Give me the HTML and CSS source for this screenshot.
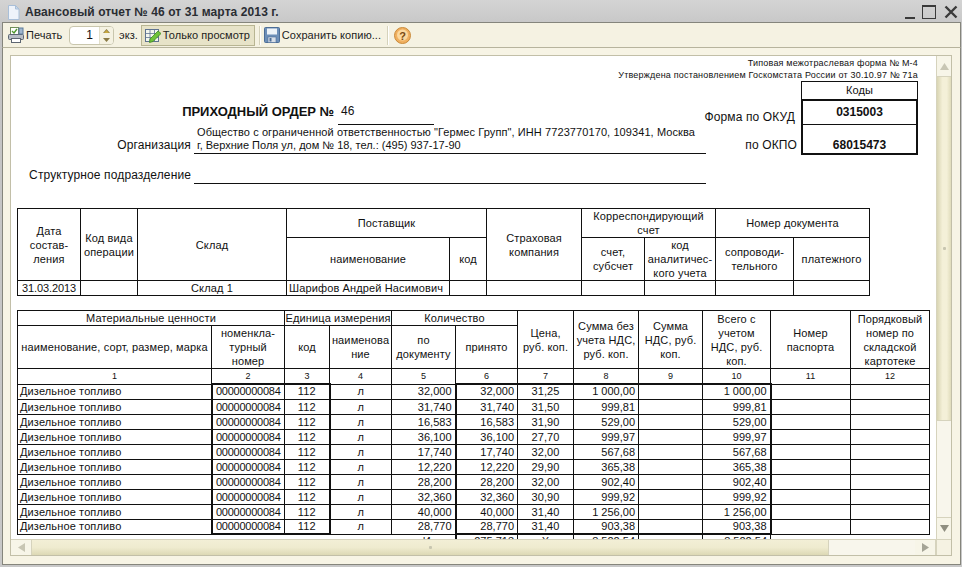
FILE: index.html
```html
<!DOCTYPE html>
<html lang="ru">
<head>
<meta charset="utf-8">
<title>Авансовый отчет № 46 от 31 марта 2013 г.</title>
<link rel="stylesheet" href="styles.css">
</head>
<body>
<div class="window">
  <header class="titlebar">
    <svg class="doc-icon" width="13" height="15" viewBox="0 0 13 15"><path d="M1.500.5h7l3.500 3.500v10.500h-10.500z" fill="#eef3fa" stroke="#a9bfd8"/><path d="M8.500.5v3.500h3.500z" fill="#c9d9ea" stroke="#a9bfd8"/></svg>
    <span class="title">Авансовый отчет № 46 от 31 марта 2013 г.</span>
    <div class="winbtns">
      <span class="wb-min"></span>
      <span class="wb-max"></span>
      <svg width="14" height="14" viewBox="0 0 14 14"><path d="M1.500 1.500l11 11M12.500 1.500l-11 11" stroke="#3a3a3a" stroke-width="2.400"/></svg>
    </div>
  </header>
  <div class="toolbar">
    <svg class="ic-print" width="17" height="16" viewBox="0 0 17 16">
      <rect x="2.500" y=".5" width="8" height="7" fill="#fff" stroke="#6f8f5a"/>
      <path d="M4 4l2 2 3-4" fill="none" stroke="#4f9a2f" stroke-width="1.400"/>
      <rect x=".5" y="7.500" width="15" height="5" rx="1" fill="#b8bec6" stroke="#5d6672"/>
      <rect x="3.500" y="11.500" width="9" height="4" fill="#fff" stroke="#5d6672"/>
      <rect x="11" y="1" width="4" height="6" fill="#9fb6cf" stroke="#5d7a99"/>
    </svg>
    <span class="tb-text t-print">Печать</span>
    <div class="spin">
      <span class="spin-val">1</span>
      <span class="spin-arrows">
        <svg width="7" height="13" viewBox="0 0 7 13"><path d="M3.500 0L7 4H0zM3.500 13L0 9h7z" fill="#8a7a45"/><path d="M3.500 1L6 4H1z" fill="#c9a93f"/></svg>
      </span>
    </div>
    <span class="tb-text t-ekz">экз.</span>
    <div class="tb-pressed">
      <svg width="16" height="16" viewBox="0 0 16 16">
        <rect x=".5" y="2.500" width="13" height="12" fill="#f3f6ee" stroke="#5f7390"/>
        <path d="M.5 6.500h13M.5 10.500h13M5 2.500v12M9.500 2.500v12" stroke="#5f7390" stroke-width=".8"/>
        <path d="M5 12l8-8 3 2.500-8 8-3.500 1z" fill="#6fc23a" stroke="#3f8a22" stroke-width=".8"/>
      </svg>
      <span class="tb-text t-view">Только просмотр</span>
    </div>
    <span class="sep s1"></span>
    <svg class="ic-save" width="16" height="16" viewBox="0 0 16 16">
      <rect x=".5" y=".5" width="15" height="15" rx="1" fill="#6d8fb8" stroke="#4c6d96"/>
      <rect x="3" y="1.500" width="10" height="6" fill="#eef3f8"/>
      <rect x="4" y="10" width="8" height="5.500" fill="#d8dfe8" stroke="#4c6d96" stroke-width=".6"/>
      <rect x="5.500" y="11" width="2" height="3.500" fill="#4c6d96"/>
    </svg>
    <span class="tb-text t-save">Сохранить копию...</span>
    <span class="sep s2"></span>
    <svg class="ic-help" width="17" height="17" viewBox="0 0 17 17">
      <circle cx="8.500" cy="8.500" r="8" fill="#f0b060" stroke="#c98a3a"/>
      <circle cx="8.500" cy="8" r="5.500" fill="#fbd9a0"/>
      <text x="8.500" y="12.500" class="help-q">?</text>
    </svg>
  </div>
  <div class="client">
    <div class="frame">
      <div class="upper">
        <div class="viewport">
          <div class="doc">
            <div class="head">
              <div class="head-left">
                <div class="order-row">
                  <span class="order-title">ПРИХОДНЫЙ ОРДЕР №</span>
                  <span class="order-num">46</span>
                </div>
                <div class="org-row">
                  <span class="field-label">Организация</span>
                  <div class="field-val">
                    <div class="org-1">Общество с ограниченной ответственностью "Гермес Групп", ИНН 7723770170, 109341, Москва</div>
                    <div class="org-2">г, Верхние Поля ул, дом № 18, тел.: (495) 937-17-90</div>
                  </div>
                </div>
                <div class="sub-row">
                  <span class="field-label">Структурное подразделение</span>
                  <div class="field-val sub-val"></div>
                </div>
              </div>
              <div class="head-right">
                <div class="form-note">Типовая межотраслевая форма № М-4</div>
                <div class="form-note">Утверждена постановлением Госкомстата России от 30.10.97 № 71а</div>
                <div class="codes">
                  <span></span><div class="code-h">Коды</div>
                  <span class="code-l l1">Форма по ОКУД</span><div class="code-v v1">0315003</div>
                  <span class="code-l l2">по ОКПО</span><div class="code-v v2">68015473</div>
                </div>
              </div>
            </div>

            <table class="t t1">
              <colgroup><col class="a1"><col class="a2"><col class="a3"><col class="a4"><col class="a5"><col class="a6"><col class="a7"><col class="a8"><col class="a9"><col class="a10"></colgroup>
              <tr class="h29">
                <td rowspan="2">Дата<br>состав-<br>ления</td>
                <td rowspan="2">Код вида<br>операции</td>
                <td rowspan="2">Склад</td>
                <td colspan="2">Поставщик</td>
                <td rowspan="2">Страховая<br>компания</td>
                <td colspan="2">Корреспондирующий<br>счет</td>
                <td colspan="2">Номер документа</td>
              </tr>
              <tr class="h43">
                <td>наименование</td><td>код</td>
                <td>счет,<br>субсчет</td><td>код<br>аналитичес-<br>кого учета</td>
                <td>сопроводи-<br>тельного</td><td>платежного</td>
              </tr>
              <tr class="h15">
                <td class="date">31.03.2013</td><td></td><td>Склад 1</td><td class="l">Шарифов Андрей Насимович</td><td></td><td></td><td></td><td></td><td></td><td></td>
              </tr>
            </table>

            <table class="t t2">
              <colgroup><col class="b1"><col class="b2"><col class="b3"><col class="b4"><col class="b5"><col class="b6"><col class="b7"><col class="b8"><col class="b9"><col class="b10"><col class="b11"><col class="b12"></colgroup>
              <tr class="h15">
                <td colspan="2">Материальные ценности</td>
                <td colspan="2">Единица измерения</td>
                <td colspan="2">Количество</td>
                <td rowspan="2">Цена,<br>руб. коп.</td>
                <td rowspan="2">Сумма без<br>учета НДС,<br>руб. коп.</td>
                <td rowspan="2">Сумма<br>НДС, руб.<br>коп.</td>
                <td rowspan="2">Всего с<br>учетом<br>НДС, руб.<br>коп.</td>
                <td rowspan="2">Номер<br>паспорта</td>
                <td rowspan="2">Порядковый<br>номер по<br>складской<br>картотеке</td>
              </tr>
              <tr class="h43">
                <td>наименование, сорт, размер, марка</td>
                <td>номенкла-<br>турный<br>номер</td>
                <td>код</td><td>наименова<br>ние</td>
                <td>по<br>документу</td><td>принято</td>
              </tr>
              <tr class="h15 small"><td>1</td><td>2</td><td>3</td><td>4</td><td>5</td><td>6</td><td>7</td><td>8</td><td>9</td><td>10</td><td>11</td><td>12</td></tr>
              <tr class="h15 first"><td class="l">Дизельное топливо</td><td class="tl g cd">00000000084</td><td class="g">112</td><td class="tl">л</td><td class="r">32,000</td><td class="tl g r">32,000</td><td class="g">31,25</td><td class="g r">1 000,00</td><td class="g"></td><td class="g r tr">1 000,00</td><td></td><td></td></tr>
              <tr class="h15"><td class="l">Дизельное топливо</td><td class="tl cd">00000000084</td><td>112</td><td class="tl">л</td><td class="r">31,740</td><td class="tl r">31,740</td><td>31,50</td><td class="r">999,81</td><td></td><td class="r tr">999,81</td><td></td><td></td></tr>
              <tr class="h15"><td class="l">Дизельное топливо</td><td class="tl cd">00000000084</td><td>112</td><td class="tl">л</td><td class="r">16,583</td><td class="tl r">16,583</td><td>31,90</td><td class="r">529,00</td><td></td><td class="r tr">529,00</td><td></td><td></td></tr>
              <tr class="h15"><td class="l">Дизельное топливо</td><td class="tl cd">00000000084</td><td>112</td><td class="tl">л</td><td class="r">36,100</td><td class="tl r">36,100</td><td>27,70</td><td class="r">999,97</td><td></td><td class="r tr">999,97</td><td></td><td></td></tr>
              <tr class="h15"><td class="l">Дизельное топливо</td><td class="tl cd">00000000084</td><td>112</td><td class="tl">л</td><td class="r">17,740</td><td class="tl r">17,740</td><td>32,00</td><td class="r">567,68</td><td></td><td class="r tr">567,68</td><td></td><td></td></tr>
              <tr class="h15"><td class="l">Дизельное топливо</td><td class="tl cd">00000000084</td><td>112</td><td class="tl">л</td><td class="r">12,220</td><td class="tl r">12,220</td><td>29,90</td><td class="r">365,38</td><td></td><td class="r tr">365,38</td><td></td><td></td></tr>
              <tr class="h15"><td class="l">Дизельное топливо</td><td class="tl cd">00000000084</td><td>112</td><td class="tl">л</td><td class="r">28,200</td><td class="tl r">28,200</td><td>32,00</td><td class="r">902,40</td><td></td><td class="r tr">902,40</td><td></td><td></td></tr>
              <tr class="h15"><td class="l">Дизельное топливо</td><td class="tl cd">00000000084</td><td>112</td><td class="tl">л</td><td class="r">32,360</td><td class="tl r">32,360</td><td>30,90</td><td class="r">999,92</td><td></td><td class="r tr">999,92</td><td></td><td></td></tr>
              <tr class="h15"><td class="l">Дизельное топливо</td><td class="tl cd">00000000084</td><td>112</td><td class="tl">л</td><td class="r">40,000</td><td class="tl r">40,000</td><td>31,40</td><td class="r">1 256,00</td><td></td><td class="r tr">1 256,00</td><td></td><td></td></tr>
              <tr class="h15 last"><td class="l">Дизельное топливо</td><td class="tl cd">00000000084</td><td>112</td><td class="tl">л</td><td class="r">28,770</td><td class="tl r">28,770</td><td>31,40</td><td class="r">903,38</td><td></td><td class="r tr">903,38</td><td></td><td></td></tr>
              <tr class="h15 total"><td class="n"></td><td class="n"></td><td class="n"></td><td class="n"></td><td class="r n rb">Итого</td><td class="r rb">275,713</td><td class="rb">Х</td><td class="r rb">8 522,54</td><td class="rb"></td><td class="r rb">8 522,54</td><td class="n"></td><td class="n"></td></tr>
            </table>
          </div>
        </div>
        <div class="vscroll">
          <div class="sb-btn v"><svg width="9" height="7" viewBox="0 0 9 7"><path d="M4.500 0L9 7H0z" fill="#c8c6b4"/></svg></div>
          <div class="sb-thumb v"><span class="grip"></span></div>
          <div class="sb-track v"></div>
          <div class="sb-btn v"><svg width="9" height="7" viewBox="0 0 9 7"><path d="M4.500 7L0 0h9z" fill="#8f8e80"/></svg></div>
        </div>
      </div>
      <div class="hscroll">
        <div class="sb-btn h"><svg width="7" height="9" viewBox="0 0 7 9"><path d="M0 4.500L7 0v9z" fill="#c8c6b4"/></svg></div>
        <div class="sb-thumb h"><span class="grip"></span></div>
        <div class="sb-track"></div>
        <div class="sb-btn h"><svg width="7" height="9" viewBox="0 0 7 9"><path d="M7 4.500L0 9V0z" fill="#a5a496"/></svg></div>
        <div class="sb-corner"></div>
      </div>
    </div>
  </div>
</div>
</body>
</html>
```
FILE: styles.css
```css
* { box-sizing: border-box; }
html, body { margin: 0; padding: 0; }
body {
  width: 962px;
  height: 567px;
  overflow: hidden;
  background: #c9c9c9;
  font-family: "Liberation Sans", Arial, sans-serif;
  color: #111;
}
.window { width: 962px; height: 567px; display: flex; flex-direction: column; padding: 0 1px 2px 2px; background: linear-gradient(#d4d4d4, #c4c4c4 30px, #c8c8c8); }

/* title */
.titlebar { height: 22px; flex: none; display: flex; align-items: center; padding: 2px 3px 0 5px; }
.doc-icon { margin-right: 5px; }
.title { font-size: 12px; font-weight: bold; color: #2a2d33; letter-spacing: .1px; }
.winbtns { margin-left: auto; display: flex; align-items: center; }
.wb-min { width: 10px; height: 2px; background: #3a3a3a; margin-top: 11px; margin-right: 7px; }
.wb-max { width: 14px; height: 14px; border: 1px solid #3a3a3a; border-top-width: 2px; margin-right: 8px; }

/* toolbar */
.toolbar {
  height: 26px; flex: none; display: flex; align-items: center;
  background: #f5f2e2; border: 1px solid #85857c; border-bottom: 1px solid #b7b49d;
  padding-left: 3px;
}
.tb-text { font-size: 11px; color: #222; white-space: nowrap; letter-spacing: .05px; }
.ic-print { margin-left: 2px; margin-right: 1px; }
.t-print { width: 43px; }
.spin { width: 45px; height: 19px; background: #fff; border: 1px solid #c9c6ad; border-radius: 4px; display: flex; align-items: center; justify-content: flex-end; font-size: 12px; }
.spin-val { margin-right: 6px; }
.spin-arrows { width: 14px; height: 17px; display: flex; align-items: center; justify-content: center; border-left: 1px solid #e2dfca; background: #f5f2e2; border-radius: 0 3px 3px 0; }
.t-ekz { margin-left: 5px; margin-right: 3px; }
.tb-pressed { width: 114px; height: 21px; background: #e7e3c8; border: 1px solid #b8b592; display: flex; align-items: center; padding-left: 3px; gap: 2px; }
.sep { width: 1px; height: 19px; background: #d5d2bb; box-shadow: 1px 0 #fff; }
.s1 { margin-left: 4px; margin-right: 4px; }
.ic-save { margin-right: 2px; }
.t-save { width: 103px; }
.s2 { margin-left: 2px; margin-right: 6px; }
.help-q { font: bold 11px "Liberation Sans", sans-serif; fill: #7a4a12; text-anchor: middle; }

/* client */
.client { flex: 1; min-height: 0; background: #f7f4e5; border: 1px solid #85857c; border-top: 0; padding: 7px 8px 8px 7px; }
.frame { height: 100%; border: 1px solid #c2bfa8; display: flex; flex-direction: column; background: #fff; }
.upper { flex: 1; min-height: 0; display: flex; }
.viewport { flex: 1; min-width: 0; overflow: hidden; background: #fff; }
.doc { padding-left: 6px; width: 925px; font-size: 11px; }

/* scrollbars */
.vscroll { width: 15px; flex: none; display: flex; flex-direction: column; background: #f5f2e2; border-left: 1px solid #d6d3bd; }
.hscroll { height: 16px; flex: none; display: flex; background: #f5f2e2; border-top: 1px solid #d6d3bd; }
.sb-btn { display: flex; align-items: center; justify-content: center; background: #f7f5e8; flex: none; }
.sb-btn.v { height: 21px; border-bottom: 1px solid #d6d3bd; }
.sb-btn.v:last-child { height: 22px; border-bottom: 0; border-top: 1px solid #d6d3bd; }
.sb-btn.h { width: 21px; border-right: 1px solid #d6d3bd; }
.sb-thumb { display: flex; align-items: center; justify-content: center; }
.sb-thumb.v { flex: none; height: 343px; background: linear-gradient(90deg, #d9d5b3, #f4f0d8 40%, #f4f0d8 70%, #e0dcbb); }
.sb-thumb.h { flex: 1; background: linear-gradient(#f3efd6, #efebcf 50%, #dcd8b5); }
.sb-track { width: 87px; background: #f8f6ec; border-left: 1px solid #d6d3bd; }
.sb-track.v { width: auto; flex: 1; border-left: 0; border-top: 1px solid #d6d3bd; }
.sb-corner { width: 15px; flex: none; background: #f5f2e2; border-left: 1px solid #d6d3bd; }
.grip { width: 3px; height: 3px; background: #c8c6b0; border-radius: 1px; }

/* header */
.head { height: 152px; width: 901px; display: flex; }
.head-left { width: 689px; flex: none; padding-top: 48px; }
.order-row { display: flex; height: 21px; }
.order-title { width: 317px; text-align: right; font-size: 13px; font-weight: bold; line-height: 16px; letter-spacing: -.05px; white-space: nowrap; }
.order-num { width: 96px; margin-left: 4px; border-bottom: 1px solid #111; padding-left: 3px; font-size: 12px; line-height: 15px; }
.org-row { display: flex; align-items: flex-end; }
.sub-row { display: flex; align-items: flex-end; margin-top: 14px; }
.field-label { width: 174px; text-align: right; font-size: 12px; line-height: 14px; white-space: nowrap; flex: none; padding-bottom: 2px; letter-spacing: .12px; }
.field-val { margin-left: 3px; width: 512px; border-bottom: 1px solid #111; padding-left: 3px; line-height: 14px; height: 29px; white-space: nowrap; font-size: 11px; }
.sub-val { height: 14px; }
.org-1 { letter-spacing: .09px; }
.org-2 { line-height: 12px; height: 14px; }
.head-right { flex: 1; min-width: 0; padding-top: 1px; margin-left: -300px; text-align: right; font-size: 9px; letter-spacing: .2px; }
.form-note { line-height: 12px; white-space: nowrap; }
.codes { display: grid; grid-template-columns: 1fr 117px; grid-template-rows: 18px 26px 30px; font-size: 11px; letter-spacing: .13px; }
.code-h { border: 1px solid #111; border-bottom: 0; text-align: center; line-height: 16px; }
.code-l { font-size: 12px; text-align: right; letter-spacing: .12px; }
.l1 { line-height: 36px; padding-right: 6px; }
.l2 { line-height: 40px; padding-right: 4px; }
.code-v { border: 2px solid #111; font-size: 12px; font-weight: bold; text-align: center; letter-spacing: 0; }
.v1 { border-bottom: 1px solid #111; line-height: 22px; }
.v2 { border-top: 0; line-height: 40px; height: 30px; overflow: hidden; }

/* tables */
.t { border-collapse: collapse; table-layout: fixed; font-size: 11px; letter-spacing: .13px; }
.t td { border: 1px solid #111; padding: 0; text-align: center; vertical-align: middle; line-height: 14px; overflow: hidden; white-space: nowrap; }
.t1 { width: 852px; }
.t2 { width: 912px; margin-top: 14px; }
.h15 { height: 15px; }
.h29 { height: 29px; }
.h43 { height: 43px; }
.t td.l { text-align: left; padding-left: 2px; }
.t td.r { text-align: right; padding-right: 3px; letter-spacing: 0; }
.t td.cd { letter-spacing: -.25px; }
.t td.date { letter-spacing: -.1px; }
.t td.tl { border-left: 2px solid #111; }
.t td.tr { border-right: 2px solid #111; }
.t .first td, .t .last td, .t .total td { line-height: 13px; }
.t .first td.g { border-top: 2px solid #111; }
.last td:nth-child(2), .last td:nth-child(3) { border-bottom: 2px solid #111; }
.last td:nth-child(n+6):nth-child(-n+10) { border-bottom: 2px solid #111; }
.t .total td.n { border: 0; }
.t .total td:nth-child(5) { border-right: 2px solid #111; }
.small td { font-size: 9px; }
.a1 { width: 63px; } .a2 { width: 57px; } .a3 { width: 149px; } .a4 { width: 163px; } .a5 { width: 37px; }
.a6 { width: 95px; } .a7 { width: 63px; } .a8 { width: 71px; } .a9 { width: 78px; } .a10 { width: 76px; }
.b1 { width: 194px; } .b2 { width: 73px; } .b3 { width: 45px; } .b4 { width: 62px; } .b5 { width: 64px; } .b6 { width: 62px; }
.b7 { width: 56px; } .b8 { width: 65px; } .b9 { width: 64px; } .b10 { width: 68px; } .b11 { width: 80px; } .b12 { width: 79px; }
```
